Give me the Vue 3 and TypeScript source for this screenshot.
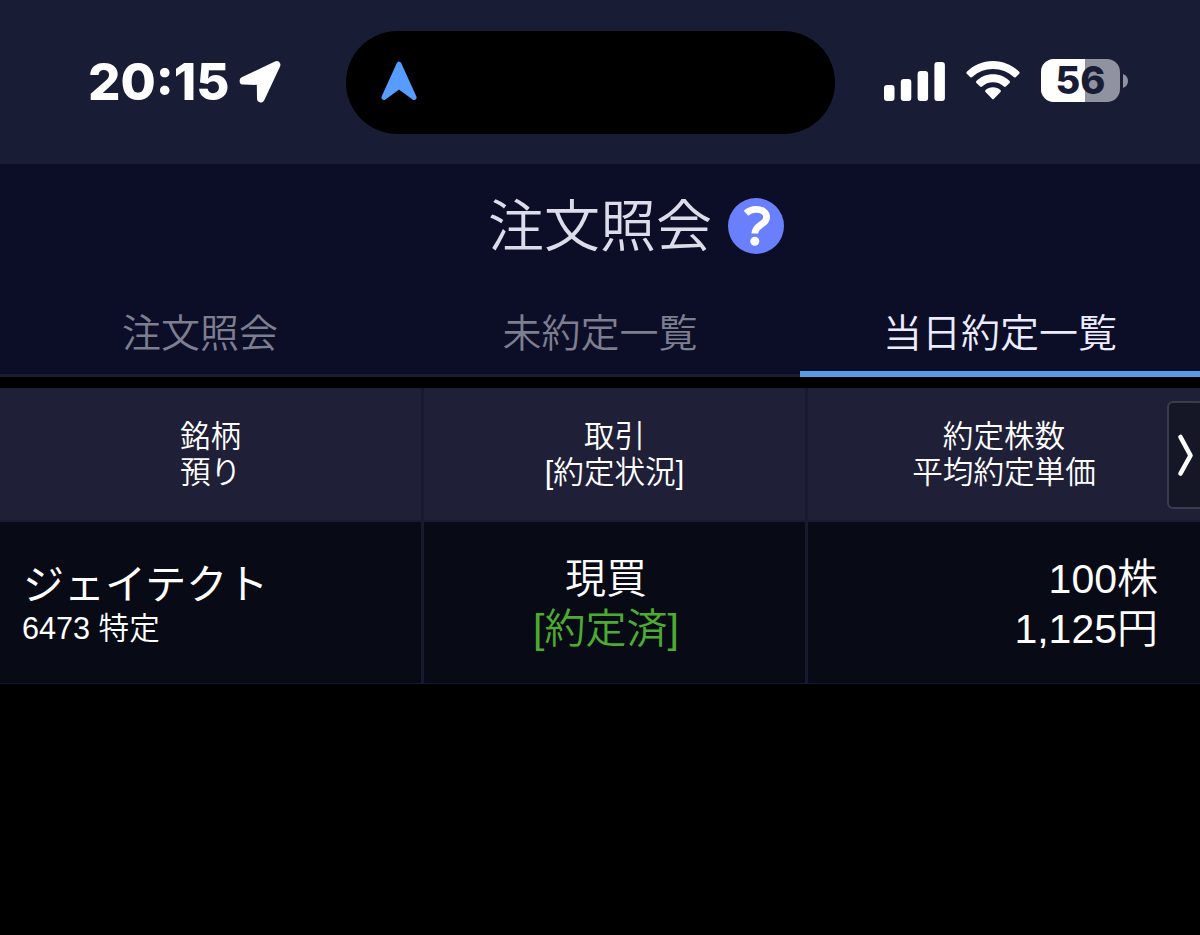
<script setup lang="ts">
import { ref } from 'vue';

interface Column {
  key: string;
  lines: string[];
}

interface Execution {
  name: string;
  code: string;
  account: string;
  trade: string;
  status: string;
  quantity: string;
  price: string;
}

const tabs = ['注文照会', '未約定一覧', '当日約定一覧'];
const activeTab = ref(2);

const columns: Column[] = [
  { key: 'name', lines: ['銘柄', '預り'] },
  { key: 'trade', lines: ['取引', '[約定状況]'] },
  { key: 'amount', lines: ['約定株数', '平均約定単価'] }
];

const executions: Execution[] = [
  {
    name: 'ジェイテクト',
    code: '6473',
    account: '特定',
    trade: '現買',
    status: '約定済',
    quantity: '100株',
    price: '1,125円'
  }
];

const battery = 56;
</script>

<template>
  <div class="screen">
    <div class="status-bar">
      <div class="clock">
        <span class="time">20:15</span>
        <svg class="location" width="42" height="42" viewBox="0 0 42 42">
          <path d="M37.6 4L21.8 37.6L21.6 20.2L4.4 19.8Z" fill="#fff" stroke="#fff" stroke-width="7.6" stroke-linejoin="round" />
        </svg>
      </div>

      <div class="island">
        <svg width="36" height="40" viewBox="0 0 36 40">
          <path d="M18 3.2L33 36.4L18 25.5L3 36.4Z" fill="#579dff" stroke="#579dff" stroke-width="5" stroke-linejoin="round" />
        </svg>
      </div>

      <div class="indicators">
        <svg class="signal" width="61" height="40" viewBox="0 0 61 40" fill="#fff">
          <rect x="0" y="24" width="10.5" height="16" rx="3" />
          <rect x="16.8" y="18" width="10.5" height="22" rx="3" />
          <rect x="33.6" y="10" width="10.5" height="30" rx="3" />
          <rect x="50.4" y="1" width="10.5" height="39" rx="3" />
        </svg>
        <svg class="wifi" width="54" height="40" viewBox="0 0 54 40" fill="#fff">
          <path d="M27 0C37.5 0 46.5 4.3 53.2 10.8Q54 11.8 53.2 12.7L49.7 16.2Q48.7 17 47.7 16.1C42 11 35.2 8.1 27 8.1S12 11 6.3 16.1Q5.3 17 4.3 16.2L.8 12.7Q0 11.8.8 10.8C7.5 4.3 16.5 0 27 0Z" />
          <path d="M27 13.2C33.8 13.2 39.3 15.8 43.6 20Q44.5 21 43.6 22L39.9 25.5Q38.9 26.4 37.9 25.5C34.8 22.8 31.5 21.3 27 21.3S19.2 22.8 16.1 25.5Q15.1 26.4 14.1 25.5L10.4 22Q9.5 21 10.4 20C14.7 15.8 20.2 13.2 27 13.2Z" />
          <path d="M27 26.3C30 26.3 32.4 27.4 34.4 29Q35.5 30 34.5 31L28 37.8Q27 38.8 26 37.8L19.5 31Q18.5 30 19.6 29C21.6 27.4 24 26.3 27 26.3Z" />
        </svg>
        <div class="battery">
          <div class="battery-fill" :style="{ width: `${battery}%` }"></div>
          <span class="battery-level">{{ battery }}</span>
        </div>
        <svg class="battery-tip" width="5" height="14" viewBox="0 0 5 14">
          <path d="M0 0Q5 2 5 7T0 14Z" fill="#9092a0" />
        </svg>
      </div>
    </div>

    <header class="header">
      <div class="title-row">
        <h1 class="title">注文照会</h1>
        <button type="button" class="help" aria-label="ヘルプ">
          <svg width="56" height="56" viewBox="0 0 56 56">
            <circle cx="28" cy="28" r="28" fill="#6a7ffb" />
            <path d="M18 15.3C21 12.5 24.3 11.4 28.3 11.4C34.2 11.4 38.6 14.2 38.6 19.4C38.6 26.5 26.8 26.8 26.8 35.5" fill="none" stroke="#fff" stroke-width="6.8" />
            <circle cx="26.8" cy="43.3" r="4.5" fill="#fff" />
          </svg>
        </button>
      </div>

      <nav class="tabs">
        <button
          v-for="(tab, index) in tabs"
          :key="tab"
          type="button"
          class="tab"
          :class="{ active: index === activeTab }"
          @click="activeTab = index"
        >
          {{ tab }}
        </button>
      </nav>
    </header>

    <main class="table">
      <div class="row head">
        <div v-for="column in columns" :key="column.key" class="cell">
          <span v-for="line in column.lines" :key="line">{{ line }}</span>
        </div>
        <button type="button" class="next" aria-label="次へ">
          <svg width="18" height="44" viewBox="0 0 18 44">
            <path d="M3.5 4L13.5 22.5L3.5 40.5" fill="none" stroke="#fff" stroke-width="4.6" stroke-linecap="round" stroke-linejoin="round" />
          </svg>
        </button>
      </div>

      <div v-for="item in executions" :key="item.code" class="row body">
        <div class="cell name">
          <span class="stock">{{ item.name }}</span>
          <span class="code">{{ item.code }} {{ item.account }}</span>
        </div>
        <div class="cell trade">
          <span>{{ item.trade }}</span>
          <span class="done">[{{ item.status }}]</span>
        </div>
        <div class="cell amount">
          <span>{{ item.quantity }}</span>
          <span>{{ item.price }}</span>
        </div>
      </div>
    </main>
  </div>
</template>

<style>
body {
  margin: 0;
  background: #000;
}
</style>

<style scoped>
.screen {
  height: 935px;
  overflow: hidden;
  background: #000;
  color: #fff;
  font-family: "Liberation Sans", "Noto Sans CJK JP", sans-serif;
  font-weight: 350;
}

button {
  padding: 0;
  border: none;
  background: none;
  font: inherit;
  color: inherit;
  cursor: pointer;
}

svg {
  display: block;
  flex-shrink: 0;
}

.status-bar {
  box-sizing: border-box;
  height: 164px;
  padding: 31px 70px 0 88px;
  display: flex;
  align-items: flex-start;
  background: #191c35;
}

.clock {
  flex-shrink: 0;
  width: 258px;
  height: 102px;
  display: flex;
  align-items: center;
}

.time {
  width: 141px;
  font-family: Inter, sans-serif;
  font-size: 51px;
  font-weight: 800;
  line-height: 60px;
  white-space: nowrap;
}

.location {
  margin-left: 10px;
}

.island {
  box-sizing: border-box;
  flex-shrink: 0;
  width: 489px;
  height: 103px;
  padding: 30px 0 0 35px;
  border-radius: 52px;
  background: #000;
}

.indicators {
  margin-left: 49px;
  height: 99px;
  display: flex;
  align-items: center;
}

.wifi {
  margin-left: 21px;
}

.battery {
  position: relative;
  width: 79px;
  height: 43px;
  margin-left: 21px;
  border-radius: 13px;
  background: #9092a0;
}

.battery-fill {
  height: 100%;
  border-radius: 13px 0 0 13px;
  background: #fff;
}

.battery-level {
  position: absolute;
  inset: 0;
  color: #191c35;
  font-family: Inter, sans-serif;
  font-size: 38px;
  font-weight: 800;
  line-height: 43px;
  text-align: center;
}

.battery-tip {
  margin-left: 3px;
}

.header {
  box-sizing: border-box;
  height: 213px;
  display: flex;
  flex-direction: column;
  justify-content: space-between;
  background: #0c0d27;
}

.title-row {
  height: 124px;
  padding-left: 72px;
  display: flex;
  align-items: center;
  justify-content: center;
  gap: 16px;
}

.title {
  margin: 0;
  padding-top: 2px;
  font-size: 56px;
  font-weight: 350;
  line-height: 80px;
  color: #dcdcea;
}

.tabs {
  height: 89px;
  display: flex;
}

.tab {
  box-sizing: border-box;
  flex: 1;
  padding-bottom: 3px;
  border-bottom: 3px solid #1b1c2e;
  font-size: 39px;
  color: #7d7e90;
}

.tab.active {
  padding-bottom: 0;
  border-bottom: 6px solid #569de3;
  color: #ececff;
}

.table {
  margin-top: 11px;
}

.row {
  position: relative;
  display: grid;
  grid-template-columns: 424px 384px 392px;
}

.cell {
  box-sizing: border-box;
  display: flex;
  flex-direction: column;
  align-items: center;
  justify-content: center;
  border-right: 3px solid #191a30;
}

.cell:last-of-type {
  border-right: none;
}

.head {
  height: 134px;
  background: #1f2038;
  font-size: 30.6px;
  line-height: 36px;
}

.head .cell {
  border-bottom: 2px solid #191a30;
}

.next {
  box-sizing: border-box;
  position: absolute;
  top: 13px;
  right: -4px;
  width: 37px;
  height: 108px;
  padding-left: 8px;
  border: 2px solid #3b3c4a;
  border-radius: 6px;
  background: #161726;
}

.body {
  height: 162px;
  background: #080a15;
  font-size: 41px;
  line-height: 50px;
}

.body .cell {
  border-bottom: 1px solid #191a30;
}

.body .name {
  align-items: flex-start;
  padding: 4px 0 0 22px;
}

.stock {
  padding-left: 1px;
  font-weight: 400;
  line-height: 46px;
}

.code {
  font-size: 30.6px;
  line-height: 40px;
}

.body .trade {
  padding: 2px 17px 0 0;
}

.done {
  color: #4cac32;
}

.body .amount {
  align-items: flex-end;
  padding: 2px 42px 0 0;
}
</style>
